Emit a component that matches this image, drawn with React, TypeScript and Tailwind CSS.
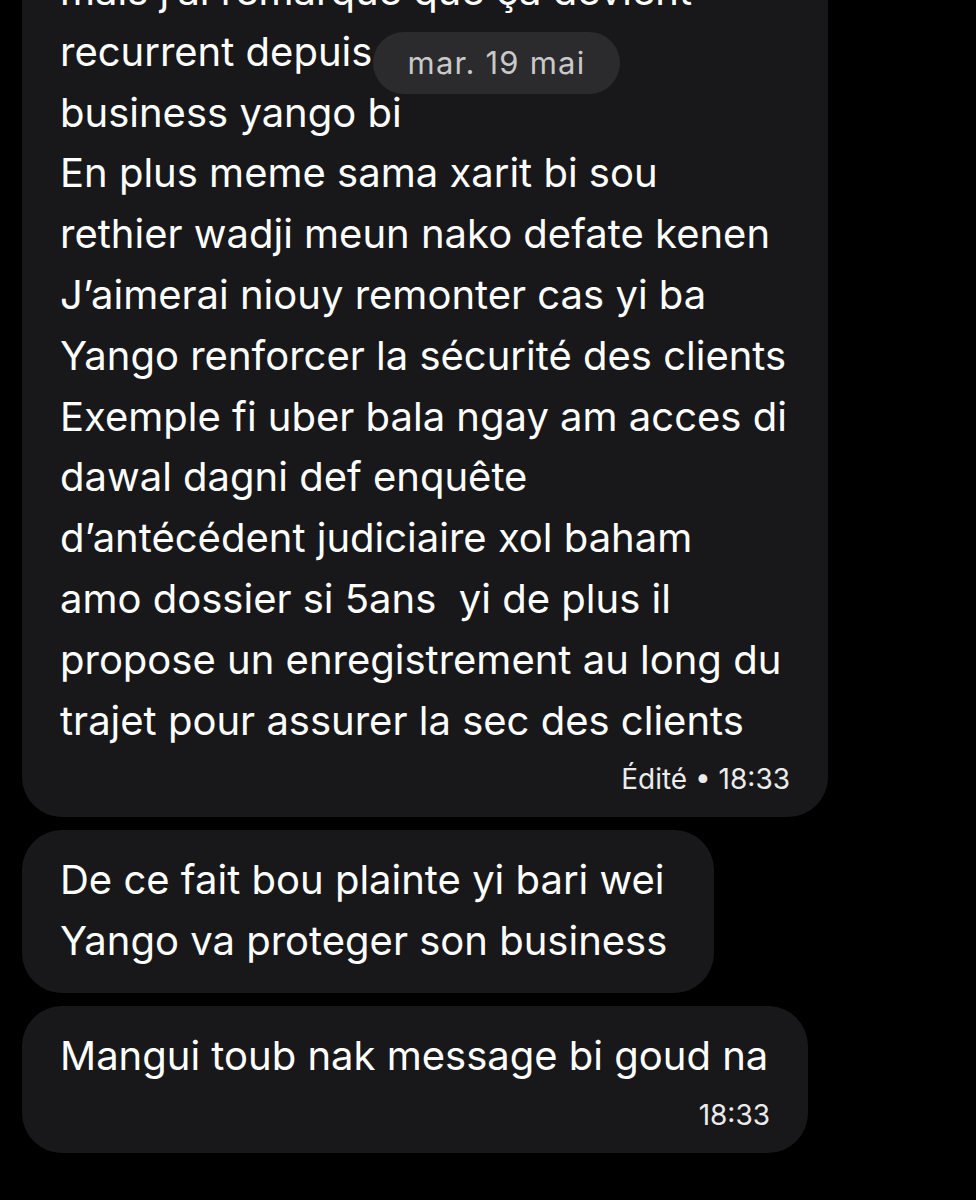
const font = { fontFamily: "Inter, 'Noto Sans', sans-serif" };

const firstLines = [
  "mais j’ai remarqué que ça devient",
  "recurrent depuis un moment",
  "business yango bi",
  "En plus meme sama xarit bi sou",
  "rethier wadji meun nako defate kenen",
  "J’aimerai niouy remonter cas yi ba",
  "Yango renforcer la sécurité des clients",
  "Exemple fi uber bala ngay am acces di",
  "dawal dagni def enquête",
  "d’antécédent judiciaire xol baham",
  "amo dossier si 5ans  yi de plus il",
  "propose un enregistrement au long du",
  "trajet pour assurer la sec des clients",
];

const Lines = ({ lines }: { lines: string[] }) => (
  <div className="text-[40px] leading-[60.8px] text-white">
    {lines.map((line, i) => (
      <div key={i} className="whitespace-pre">
        {line}
      </div>
    ))}
  </div>
);

const Bubble = ({
  lines,
  meta,
  width,
}: {
  lines: string[];
  meta?: string;
  width: string;
}) => (
  <div className={`bg-[#18181a] rounded-[40px] pl-[38px] pr-[38px] pt-[20px] ${meta ? "pb-[18px]" : "pb-[21px]"} ${width}`}>
    <Lines lines={lines} />
    {meta && (
      <div className="flex justify-end text-[28px] leading-[40px] text-[#ececec] mt-[8px]">
        {meta}
      </div>
    )}
  </div>
);

export default function App() {
  return (
    <div className="w-[976px] h-[1200px] bg-black overflow-hidden relative" style={font}>
      <div className="flex flex-col items-start gap-[13px] pl-[22px] mt-[-59px]">
        <Bubble lines={firstLines} meta="Édité • 18:33" width="w-[806px]" />
        <Bubble
          lines={["De ce fait bou plainte yi bari wei", "Yango va proteger son business"]}
          width="w-[692px]"
        />
        <Bubble
          lines={["Mangui toub nak message bi goud na"]}
          meta="18:33"
          width="w-[786px]"
        />
      </div>
      <div className="absolute left-[373px] top-[32px] w-[247px] h-[62px] rounded-full bg-[#2b2b2d] flex items-center justify-center text-[31px] tracking-[1.2px] text-[#c9c9c9]">
        mar. 19 mai
      </div>
    </div>
  );
}
